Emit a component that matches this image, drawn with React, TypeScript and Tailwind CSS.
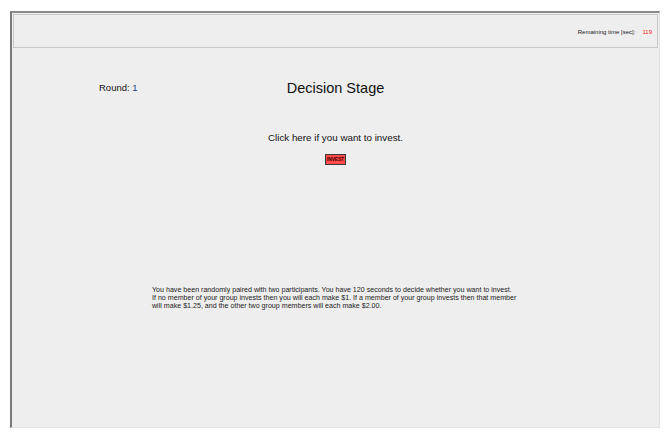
import React from "react";

export default function App() {
  return (
    <div className="w-[668px] h-[438px] bg-white pt-[11px] pl-[10px]" style={{ fontFamily: '"Liberation Sans", Arial, sans-serif' }}>
      <div className="w-[650px] h-[417px] bg-[#eeeeee] border-l-2 border-t-2 border-l-[#7a7a7a] border-t-[#8a8a8a] border-r border-b border-r-[#e2e2e2] border-b-[#e2e2e2] flex flex-col">
        <div className="mx-[1px] mt-[1px] h-[34px] border border-[#c9c9c9] flex items-center justify-end pr-[5px] pt-[3px]">
          <span className="text-[6px] text-[#222]">Remaining time [sec]:</span>
          <span className="text-[6px] text-[#ff2020] ml-[7px]">119</span>
        </div>
        <div className="mt-[32px] h-[16px] grid grid-cols-[1fr_auto_1fr] items-center">
          <div className="pl-[87px] text-[9.5px] text-[#111] leading-[16px]">
            Round: <span className="text-[#1a3d7c]">1</span>
          </div>
          <div className="text-[14.5px] leading-[16px] text-[#111]">Decision Stage</div>
          <div />
        </div>
        <div className="mt-[36px] text-center text-[9.8px] leading-[12px] text-[#111]">
          Click here if you want to invest.
        </div>
        <div className="mt-[10px] flex justify-center">
          <button className="w-[21px] h-[11px] bg-[#ff4a4a] border border-[#3a3a3a] flex items-center justify-center text-[5px] font-bold text-[#400] leading-none tracking-[-0.2px]">
            INVEST
          </button>
        </div>
        <div className="mt-[121px] pl-[140px] text-[7.1px] leading-[8px] text-[#222]">
          You have been randomly paired with two participants. You have 120 seconds to decide whether you want to invest.
          <br />
          If no member of your group invests then you will each make $1. If a member of your group invests then that member
          <br />
          will make $1.25, and the other two group members will each make $2.00.
        </div>
      </div>
    </div>
  );
}
